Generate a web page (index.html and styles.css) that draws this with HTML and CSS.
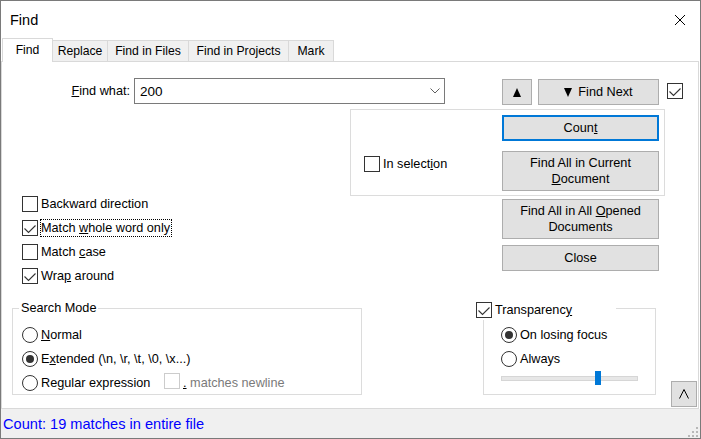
FILE: index.html
```html
<!DOCTYPE html>
<html>
<head>
<meta charset="utf-8">
<link rel="stylesheet" href="styles.css">
</head>
<body>
<div class="window">
  <div class="titlebar">
    <span class="title">Find</span>
    <svg class="close" width="10" height="10" viewBox="0 0 10 10"><path d="M0 0L10 10M10 0L0 10" stroke="#000" stroke-width="1" fill="none"/></svg>
  </div>
  <div class="tabs">
    <div class="tab tab-find active">Find</div>
    <div class="tab tab-replace">Replace</div>
    <div class="tab tab-files">Find in Files</div>
    <div class="tab tab-projects">Find in Projects</div>
    <div class="tab tab-mark">Mark</div>
  </div>
  <div class="panel">
    <div class="find-row">
      <span class="find-label"><u>F</u>ind what:</span>
      <div class="combo">
        <span class="combo-text">200</span>
        <svg class="chev" width="10" height="6" viewBox="0 0 10 6"><path d="M0.5 0.5L5 5L9.5 0.5" stroke="#606060" stroke-width="1" fill="none"/></svg>
      </div>
      <button class="btn btn-up"><svg width="8" height="9" viewBox="0 0 8 9"><path d="M0 9L4 0L8 9Z" fill="#000"/></svg></button>
      <button class="btn btn-next"><svg width="8" height="9" viewBox="0 0 8 9"><path d="M0 0L8 0L4 9Z" fill="#000"/></svg><span>Find Next</span></button>
      <span class="cb cb-top"><svg width="14" height="14" viewBox="0 0 14 14"><path d="M1.5 7.5L5.5 11.5L12.5 4.5" stroke="#333" stroke-width="1.1" fill="none"/></svg></span>
    </div>

    <div class="scope-group">
      <div class="scope-left">
        <span class="cb"></span><span class="lbl">In select<u>i</u>on</span>
      </div>
      <div class="scope-btns">
        <button class="btn btn-count"><span>Coun<u>t</u></span></button>
        <button class="btn btn-tall"><span class="btn-lines">Find All in Current<br><u>D</u>ocument</span></button>
      </div>
    </div>

    <div class="opts-row">
      <div class="opts-left">
        <div class="check-row"><span class="cb"></span><span class="lbl">Backward direction</span></div>
        <div class="check-row"><span class="cb"><svg width="14" height="14" viewBox="0 0 14 14"><path d="M1.5 7.5L5.5 11.5L12.5 4.5" stroke="#333" stroke-width="1.1" fill="none"/></svg></span><span class="lbl focus">Match <u>w</u>hole word only</span></div>
        <div class="check-row"><span class="cb"></span><span class="lbl">Match <u>c</u>ase</span></div>
        <div class="check-row"><span class="cb"><svg width="14" height="14" viewBox="0 0 14 14"><path d="M1.5 7.5L5.5 11.5L12.5 4.5" stroke="#333" stroke-width="1.1" fill="none"/></svg></span><span class="lbl">Wra<u>p</u> around</span></div>
      </div>
      <div class="opts-right">
        <button class="btn btn-tall"><span class="btn-lines">Find All in All <u>O</u>pened<br>Documents</span></button>
        <button class="btn btn-close"><span>Close</span></button>
      </div>
    </div>

    <div class="bottom-row">
      <div class="group mode-group">
        <span class="group-title">Search Mode</span>
        <div class="radio-list">
          <div class="check-row"><span class="radio"></span><span class="lbl"><u>N</u>ormal</span></div>
          <div class="check-row"><span class="radio on"></span><span class="lbl">E<u>x</u>tended (\n, \r, \t, \0, \x...)</span></div>
          <div class="check-row">
            <span class="regex-opt"><span class="radio"></span><span class="lbl">Re<u>g</u>ular expression</span></span>
            <span class="cb cb-disabled"></span><span class="lbl disabled"><u>.</u> matches newline</span>
          </div>
        </div>
      </div>

      <div class="group trans-group">
        <div class="trans-title">
          <span class="cb"><svg width="14" height="14" viewBox="0 0 14 14"><path d="M1.5 7.5L5.5 11.5L12.5 4.5" stroke="#333" stroke-width="1.1" fill="none"/></svg></span><span class="lbl">Transparenc<u>y</u></span>
        </div>
        <div class="radio-list trans-list">
          <div class="check-row"><span class="radio on"></span><span class="lbl">On losing focus</span></div>
          <div class="check-row"><span class="radio"></span><span class="lbl">Always</span></div>
        </div>
        <div class="slider">
          <div class="track"></div>
          <div class="thumb" style="left:94px"></div>
        </div>
      </div>

      <button class="btn btn-collapse"><svg width="10" height="10" viewBox="0 0 10 10"><path d="M0.5 9.5L5 0.5L9.5 9.5" stroke="#000" stroke-width="1" fill="none"/></svg></button>
    </div>
  </div>
  <div class="status">
    <span class="status-text">Count: 19 matches in entire file</span>
    <svg class="grip" width="11" height="11" viewBox="0 0 11 11">
      <rect x="8" y="0" width="2" height="2" fill="#b8b8b8"/>
      <rect x="4" y="4" width="2" height="2" fill="#b8b8b8"/>
      <rect x="8" y="4" width="2" height="2" fill="#b8b8b8"/>
      <rect x="0" y="8" width="2" height="2" fill="#b8b8b8"/>
      <rect x="4" y="8" width="2" height="2" fill="#b8b8b8"/>
      <rect x="8" y="8" width="2" height="2" fill="#b8b8b8"/>
    </svg>
  </div>
</div>
</body>
</html>
```

FILE: styles.css
```css
* { box-sizing: border-box; }
html, body { margin: 0; padding: 0; }
body {
  width: 701px;
  height: 439px;
  overflow: hidden;
  background: #fff;
  color: #000;
  font-family: "Liberation Sans", Arial, sans-serif;
  font-size: 12.7px;
}
u { text-decoration: underline; text-underline-offset: 1px; }

.window {
  width: 701px;
  height: 439px;
  border: 1px solid #7a7a7a;
  display: flex;
  flex-direction: column;
  background: #fff;
}

.titlebar {
  height: 37px;
  flex: none;
  display: flex;
  align-items: center;
  padding-left: 9px;
}
.title { flex: 1; font-size: 14.5px; }
.close { margin-right: 15px; }

.tabs {
  height: 23px;
  flex: none;
  display: flex;
  align-items: flex-end;
  padding-left: 1px;
}
.tab {
  height: 21px;
  border-top: 1px solid #d9d9d9;
  border-right: 1px solid #d9d9d9;
  background: #f0f0f0;
  font-size: 12.2px;
  display: flex;
  align-items: center;
  justify-content: center;
}
.tab.active {
  height: 24px;
  margin-bottom: -1px;
  background: #fff;
  border-left: 1px solid #d9d9d9;
  position: relative;
  z-index: 1;
  padding-bottom: 2px;
}
.tab-find { width: 51px; }
.tab-replace { width: 55px; }
.tab-files { width: 81px; }
.tab-projects { width: 100px; }
.tab-mark { width: 45px; }

.panel {
  height: 348px;
  flex: none;
  border: 1px solid #d9d9d9;
  margin-right: 1px;
}

.btn {
  font: inherit;
  color: #000;
  background: #e1e1e1;
  border: 1px solid #adadad;
  padding: 0;
  margin: 0;
  display: flex;
  align-items: center;
  justify-content: center;
  text-align: center;
  line-height: 16px;
  flex: none;
}
.btn-lines { display: block; text-align: center; }

.find-row {
  display: flex;
  align-items: flex-start;
  margin-top: 16px;
  height: 26px;
}
.find-label {
  width: 128px;
  margin-right: 4px;
  text-align: right;
  line-height: 26px;
}
.combo {
  width: 311px;
  height: 26px;
  border: 1px solid #7a7a7a;
  display: flex;
  align-items: center;
  justify-content: space-between;
  padding: 0 4px 0 5px;
}
.combo-text { font-size: 13.5px; }
.btn-up { margin-left: 57px; margin-top: 1px; width: 30px; height: 26px; }
.btn-next { margin-left: 6px; margin-top: 1px; width: 121px; height: 26px; gap: 6px; }
.cb-top { margin-left: 8px; margin-top: 5px; }

.cb {
  width: 16px;
  height: 16px;
  flex: none;
  border: 1px solid #333;
  background: #fff;
  display: block;
}
.cb svg { display: block; }
.cb-disabled { border-color: #cccccc; margin-top: -4px; }

.radio {
  width: 16px;
  height: 16px;
  flex: none;
  border: 1px solid #333;
  border-radius: 50%;
  background: #fff;
  display: flex;
  align-items: center;
  justify-content: center;
}
.radio.on::after {
  content: "";
  width: 8px;
  height: 8px;
  border-radius: 50%;
  background: #333;
}

.lbl {
  margin-left: 2px;
  border: 1px solid transparent;
  padding-right: 1px;
  line-height: 16px;
  white-space: nowrap;
}
.lbl.focus { border: 1px dotted #000; }
.lbl.disabled { color: #7a7a7a; }
.lbl.disabled u { color: #000; }

.check-row {
  display: flex;
  align-items: center;
  height: 16px;
}

.scope-group {
  margin-top: 5px;
  margin-left: 348px;
  width: 315px;
  height: 87px;
  border: 1px solid #dcdcdc;
  display: flex;
  align-items: flex-start;
  padding: 5px 5px 0 13px;
}
.scope-left {
  flex: 1;
  display: flex;
  align-items: center;
  height: 16px;
  margin-top: 41px;
}
.scope-btns {
  width: 157px;
  display: flex;
  flex-direction: column;
  gap: 10px;
}
.btn-count { height: 26px; width: 157px; border: 2px solid #0078d7; }
.btn-tall { height: 40px; width: 157px; }

.opts-row {
  display: flex;
  height: 88px;
}
.opts-left {
  width: 500px;
  padding-left: 20px;
  display: flex;
  flex-direction: column;
  gap: 8px;
}
.opts-right {
  width: 157px;
  margin-top: 3px;
  display: flex;
  flex-direction: column;
  gap: 6px;
}
.btn-close { height: 26px; width: 157px; }

.bottom-row {
  display: flex;
  align-items: flex-start;
  margin-top: 16px;
}
.group {
  margin-top: 8px;
  height: 87px;
  border: 1px solid #dcdcdc;
  flex: none;
}
.mode-group {
  margin-left: 10px;
  width: 350px;
  padding-left: 9px;
}
.group-title {
  display: block;
  width: fit-content;
  margin-top: -9px;
  margin-left: -3px;
  padding: 0 2px;
  line-height: 16px;
  height: 16px;
  background: #fff;
}
.radio-list {
  margin-top: 11px;
  display: flex;
  flex-direction: column;
  gap: 8px;
}
.regex-opt {
  width: 142px;
  display: flex;
  align-items: center;
  flex: none;
}

.trans-group {
  margin-left: 121px;
  width: 173px;
  padding-left: 17px;
}
.trans-title {
  margin-top: -9px;
  margin-left: -25px;
  width: 140px;
  height: 20px;
  background: #fff;
  display: flex;
  align-items: center;
}
.trans-list { margin-top: 7px; }
.slider {
  position: relative;
  width: 137px;
  height: 14px;
  margin-top: 4px;
  display: flex;
  align-items: center;
}
.track {
  width: 137px;
  height: 5px;
  background: #e7e7e7;
  border: 1px solid #d6d6d6;
}
.thumb {
  position: absolute;
  top: 0;
  width: 6px;
  height: 14px;
  background: #0078d7;
}

.btn-collapse {
  margin-left: 15px;
  margin-top: 81px;
  width: 26px;
  height: 26px;
}

.status {
  flex: 1;
  background: #f0f0f0;
  display: flex;
  align-items: center;
  padding-left: 2px;
}
.status-text {
  flex: 1;
  color: #0000ff;
  font-size: 14.6px;
}
.grip {
  align-self: flex-end;
  margin-right: 1px;
}
```
